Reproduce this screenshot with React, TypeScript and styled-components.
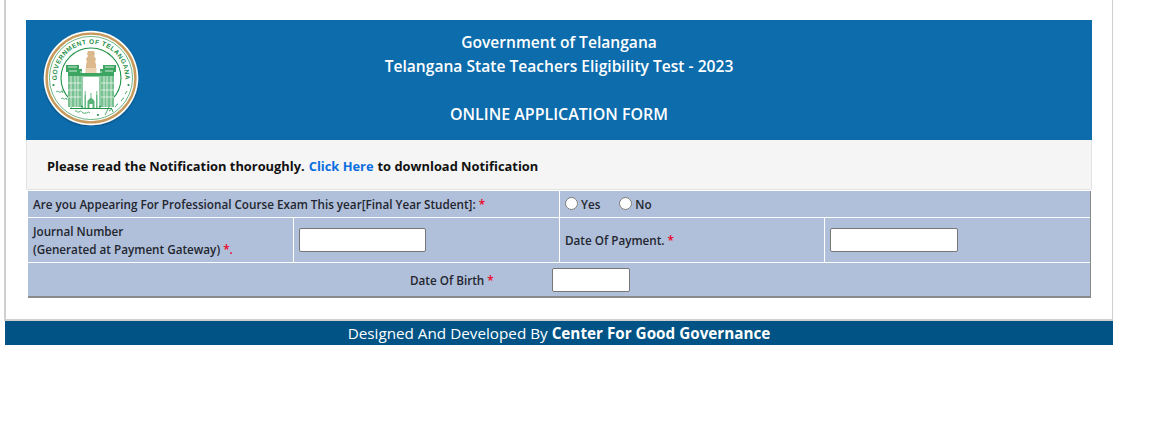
import React from "react";
import styled, { createGlobalStyle } from "styled-components";

const GlobalStyle = createGlobalStyle`
  html, body {
    margin: 0;
    padding: 0;
    background: #fff;
    font-family: "Open Sans", "Noto Sans", sans-serif;
  }
`;

const Page = styled.div`
  width: 1109px;
  margin-left: 4px;
`;

const Frame = styled.main`
  box-sizing: border-box;
  height: 321px;
  padding: 20px 20px 0 20px;
  border: solid #cfcfcf;
  border-width: 0 1px 2px 2px;
`;

const Banner = styled.header`
  position: relative;
  height: 120px;
  padding-top: 10px;
  box-sizing: border-box;
  background: #0d6cac;
  color: #fff;
  text-align: center;
  font-size: 15.6px;
  font-weight: 600;
  line-height: 24px;
`;

const Seal = styled.svg`
  position: absolute;
  left: 16.5px;
  top: 9.5px;
  width: 96px;
  height: 96px;
`;

const BannerLine = styled.div`
  margin-top: 24px;
  font-size: 16px;
`;

const Notice = styled.div`
  box-sizing: border-box;
  height: 50px;
  padding: 2px 0 0 20px;
  display: flex;
  align-items: center;
  background: #f5f5f5;
  border: 1px solid #e3e3e3;
  border-top: 0;
  border-radius: 0 0 2px 2px;
  color: #111;
  font-size: 12.87px;
  font-weight: 700;
`;

const NoticeLink = styled.a`
  color: #0a6fe0;
  margin: 0 4px;
  text-decoration: none;
`;

const FormGrid = styled.form`
  box-sizing: border-box;
  width: 1063px;
  margin: 1px 0 0 2px;
  background: #b0c0da;
  border-right: 1px solid #8a8a8a;
  border-bottom: 2px solid #8a8a8a;
  color: #23262f;
  font-size: 11.7px;
  font-weight: 600;
`;

const Row = styled.div<{ $h: number; $last?: boolean }>`
  box-sizing: border-box;
  display: flex;
  height: ${(p) => p.$h}px;
  border-bottom: ${(p) => (p.$last ? "0" : "1px solid #fff")};
`;

const Cell = styled.div<{ $w?: number; $line?: boolean }>`
  box-sizing: border-box;
  ${(p) => (p.$w ? `width: ${p.$w}px;` : "flex: 1;")}
  padding-left: 5px;
  display: flex;
  align-items: center;
  border-right: ${(p) => (p.$line ? "1px solid #fff" : "0")};
`;

const TwoLines = styled.div`
  line-height: 18px;
`;

const Req = styled.span`
  color: #ee0022;
`;

const TextInput = styled.input<{ $w: number }>`
  box-sizing: border-box;
  width: ${(p) => p.$w}px;
  height: 24px;
  padding: 0;
  background: #fff;
  border: 1px solid #767676;
  border-radius: 2px;
`;

const RadioLabel = styled.label`
  display: inline-flex;
  align-items: center;
  margin-right: 19px;
`;

const Radio = styled.input`
  width: 13px;
  height: 13px;
  margin: -2px 3px 0 0;
`;

const BirthRow = styled(Row)`
  align-items: center;
  padding-left: 382px;
`;

const BirthLabel = styled.span`
  margin-right: 58px;
`;

const Footer = styled.footer`
  margin-left: 1px;
  height: 24px;
  background: #015385;
  color: #fff;
  text-align: center;
  font-size: 15.25px;
  line-height: 25px;
`;

const Strong = styled.b`
  font-weight: 700;
`;

function TelanganaSeal() {
  return (
    <Seal viewBox="0 0 96 96">
      <defs>
        <path id="sealArc" d="M 13.8 48 A 34.2 34.2 0 0 1 82.2 48" />
        <filter id="sealShadow" x="-10%" y="-10%" width="120%" height="120%">
          <feDropShadow dx="0" dy="1" stdDeviation="0.8" floodColor="#000" floodOpacity="0.35" />
        </filter>
      </defs>
      <circle cx="48" cy="48" r="47.3" fill="#fff" filter="url(#sealShadow)" />
      <circle cx="48" cy="48" r="44.4" fill="none" stroke="#c79a5c" strokeWidth="2.4" />
      <circle cx="48" cy="48" r="41.6" fill="none" stroke="#2f9a52" strokeWidth="0.7" />
      <circle cx="48" cy="48" r="30" fill="none" stroke="#1f9148" strokeWidth="1.1" />
      <text fontSize="6.5" fontWeight="700" fill="#1f8f47" fontFamily="Liberation Sans, sans-serif" letterSpacing="0.5">
        <textPath href="#sealArc" startOffset="50%" textAnchor="middle">
          GOVERNMENT OF TELANGANA
        </textPath>
      </text>
      <circle cx="10.5" cy="55" r="1.1" fill="#1f8f47" />
      <circle cx="85.5" cy="55" r="1.1" fill="#1f8f47" />
      <circle cx="55" cy="85" r="1" fill="#1f8f47" />
      {/* telugu script squiggles along the lower ring */}
      <path
        d="M13 62c2-2 3 1 5 0s0-3 2 1M18 69c2-2 3 1 4 0s1-2 2 1M25 77c2-2 3 1 4 0M32 81c2-1 2 2 4 1s1-2 3 0 2 1 4 1 2-2 4 0"
        fill="none"
        stroke="#3aa05c"
        strokeWidth="0.9"
      />
      <path d="M62 85l4-8M66 81l3-2 1 3M72 77c2-1 1-3 3-3M78 71c2-1 1-3 3-3M82 64l2-3" fill="none" stroke="#3aa05c" strokeWidth="0.9" />
      {/* lion capital */}
      <path d="M45 21h6l1 3-1 2 2 3-1 3 1 2v4H43v-4l1-2-1-3 2-3-1-2z" fill="#dcb98c" />
      <rect x="42.5" y="38" width="11" height="5" fill="#ead2b2" />
      {/* kakatiya gate */}
      <path d="M23 35h13v4h3v4h18v-4h3v-4h13v7h-2v4H25v-4h-2z" fill="#3ba561" />
      <path d="M25 37h9M62 37h9M26 41h8M62 41h8M38 41v2M58 41v2" stroke="#e4f4e8" strokeWidth="0.9" />
      <path d="M25 46h13v31H25zM58 46h13v31H58z" fill="#77c190" />
      <path
        d="M28 46v31M32 46v31M35 46v31M61 46v31M64 46v31M68 46v31M25 53h13M25 60h13M25 67h13M58 53h13M58 60h13M58 67h13"
        stroke="#eef8f1"
        strokeWidth="0.8"
      />
      <rect x="38" y="44" width="20" height="34" fill="#3ba561" opacity="0.55" />
      <rect x="40" y="47" width="16" height="31" rx="1" fill="#fff" />
      {/* charminar */}
      <path d="M41.5 78V65h1.4v13zM53.1 78V65h1.4v13zM44.5 78v-7l3.5-4 3.5 4v7h-2v-4h-3v4z" fill="#5bb37a" />
      <path d="M42.2 61v4M53.8 61v4M48 63v4" stroke="#5bb37a" strokeWidth="0.9" />
      <path d="M27 78.5h42" stroke="#1f9148" strokeWidth="1" />
    </Seal>
  );
}

function App() {
  return (
    <Page>
      <GlobalStyle />
      <Frame>
        <Banner>
          <TelanganaSeal />
          <div>Government of Telangana</div>
          <div>Telangana State Teachers Eligibility Test - 2023</div>
          <BannerLine>ONLINE APPLICATION FORM</BannerLine>
        </Banner>
        <Notice>
          Please read the Notification thoroughly.
          <NoticeLink href="#">Click Here</NoticeLink>
          to download Notification
        </Notice>
        <FormGrid>
          <Row $h={27}>
            <Cell $w={532} $line>
              <span>
                Are you Appearing For Professional Course Exam This year[Final Year Student]: <Req>*</Req>
              </span>
            </Cell>
            <Cell>
              <RadioLabel>
                <Radio type="radio" name="final" />
                Yes
              </RadioLabel>
              <RadioLabel>
                <Radio type="radio" name="final" />
                No
              </RadioLabel>
            </Cell>
          </Row>
          <Row $h={45}>
            <Cell $w={266} $line>
              <TwoLines>
                Journal Number
                <br />
                (Generated at Payment Gateway) <Req>*.</Req>
              </TwoLines>
            </Cell>
            <Cell $w={266} $line>
              <TextInput $w={127} />
            </Cell>
            <Cell $w={265} $line>
              <span>
                Date Of Payment. <Req>*</Req>
              </span>
            </Cell>
            <Cell>
              <TextInput $w={128} />
            </Cell>
          </Row>
          <BirthRow $h={33} $last>
            <BirthLabel>
              Date Of Birth <Req>*</Req>
            </BirthLabel>
            <TextInput $w={78} />
          </BirthRow>
        </FormGrid>
      </Frame>
      <Footer>
        Designed And Developed By <Strong>Center For Good Governance</Strong>
      </Footer>
    </Page>
  );
}

export default App;
